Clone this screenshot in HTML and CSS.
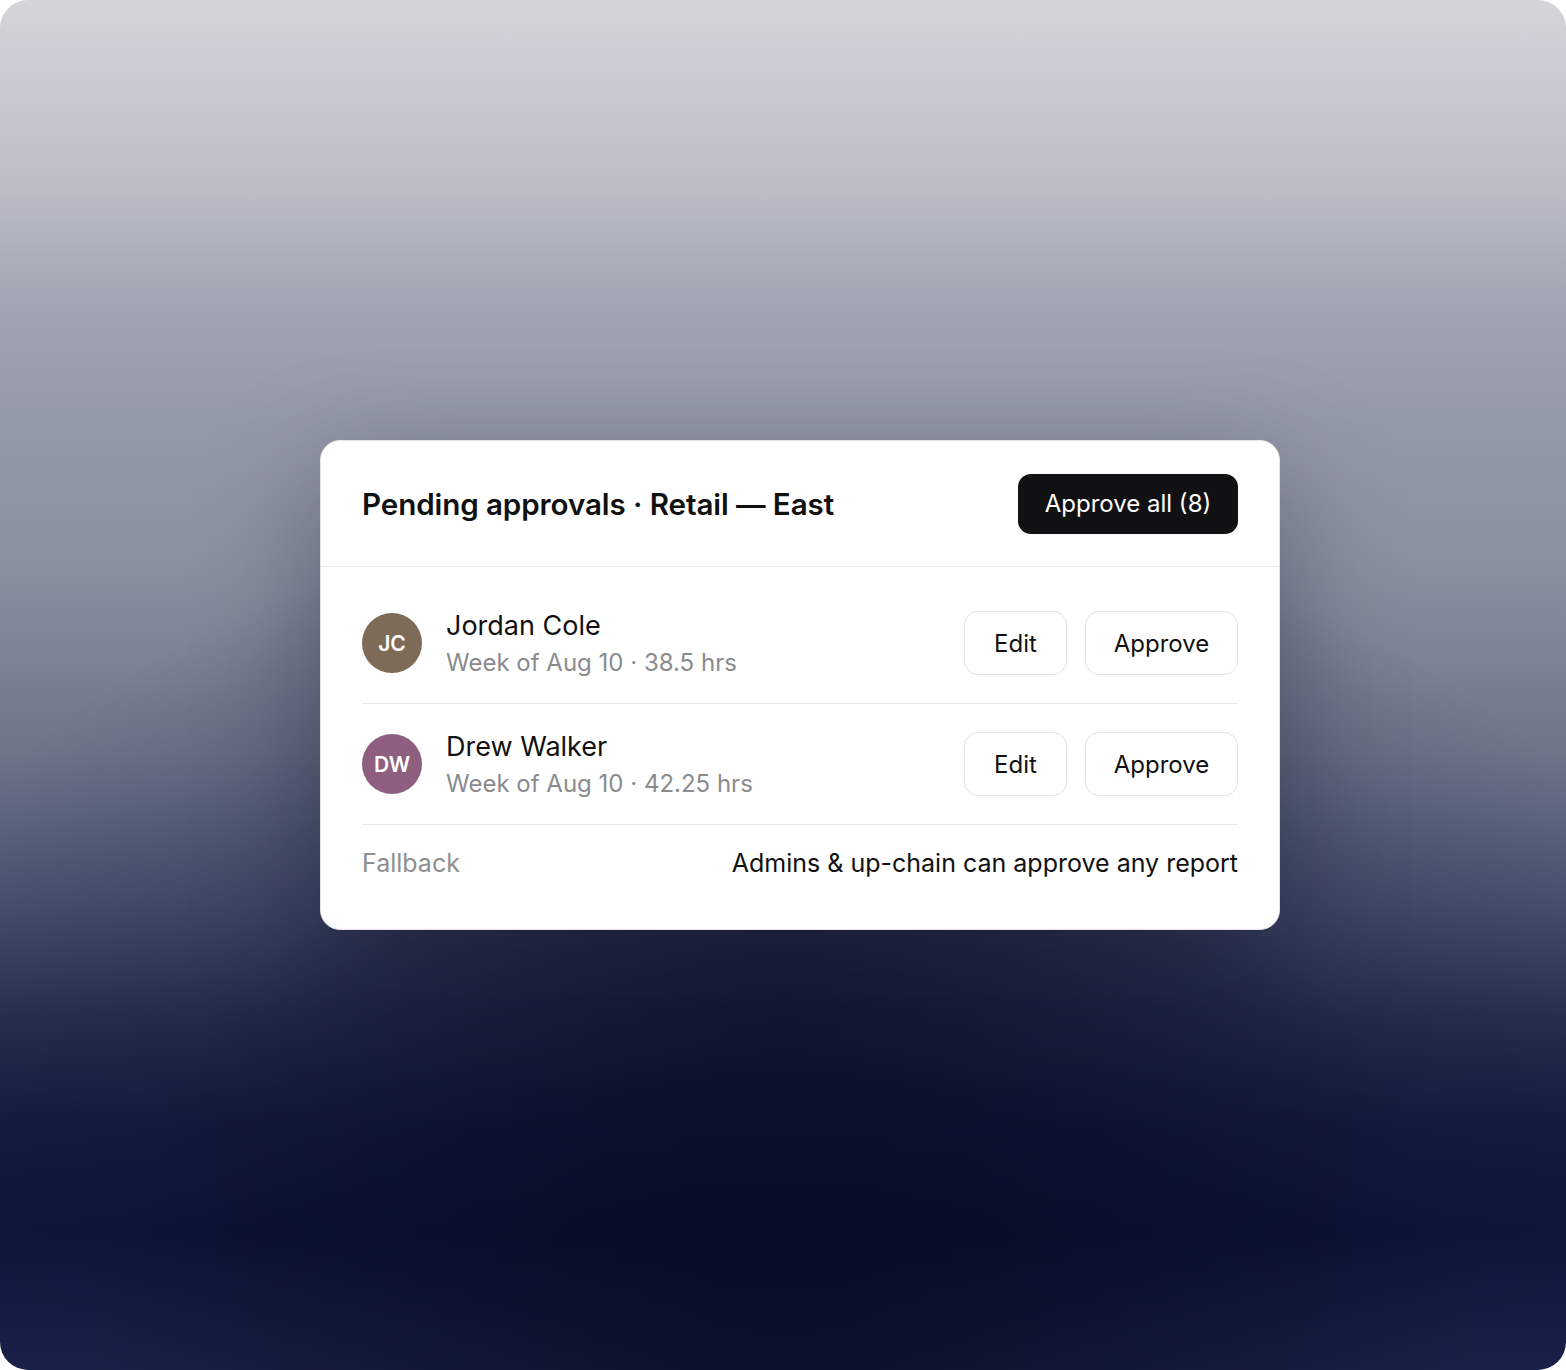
FILE: index.html
```html
<!DOCTYPE html>
<html lang="en">
<head>
<meta charset="utf-8">
<title>Pending approvals</title>
<link rel="stylesheet" href="styles.css">
</head>
<body>
<div class="stage">
  <div class="card">
    <div class="card-head">
      <h1 class="title">Pending approvals · Retail — East</h1>
      <button class="btn-primary">Approve all (8)</button>
    </div>
    <div class="card-body">
      <div class="row">
        <div class="avatar avatar-jc">JC</div>
        <div class="person">
          <div class="name">Jordan Cole</div>
          <div class="meta">Week of Aug 10 · 38.5 hrs</div>
        </div>
        <div class="actions">
          <button class="btn btn-edit">Edit</button>
          <button class="btn btn-approve">Approve</button>
        </div>
      </div>
      <div class="row">
        <div class="avatar avatar-dw">DW</div>
        <div class="person">
          <div class="name">Drew Walker</div>
          <div class="meta">Week of Aug 10 · 42.25 hrs</div>
        </div>
        <div class="actions">
          <button class="btn btn-edit">Edit</button>
          <button class="btn btn-approve">Approve</button>
        </div>
      </div>
      <div class="footer">
        <span class="footer-label">Fallback</span>
        <span class="footer-value">Admins &amp; up-chain can approve any report</span>
      </div>
    </div>
  </div>
</div>
</body>
</html>
```
FILE: styles.css
```css
html, body {
  margin: 0;
  padding: 0;
  background: #ffffff;
}
body {
  font-family: Inter, "Noto Sans", "Liberation Sans", sans-serif;
}
.stage {
  width: 1566px;
  height: 1370px;
  border-radius: 28px;
  overflow: hidden;
  box-sizing: border-box;
  display: flex;
  align-items: center;
  justify-content: center;
  padding-left: 34px;
  background:
    radial-gradient(ellipse 700px 620px at 50% 100%, rgba(3,5,20,0.55) 0%, rgba(3,5,20,0.25) 55%, rgba(3,5,20,0) 100%),
    radial-gradient(ellipse 900px 520px at 50% 75%, rgba(8,12,45,0.55) 0%, rgba(8,12,45,0.2) 60%, rgba(8,12,45,0) 100%),
    linear-gradient(180deg, #d3d5db 0%, #babdc6 14%, #a2a6b2 22%, #9499a6 31%, #8a90a0 41%, #6e7589 55%, #4a5170 66%, #2a3152 74%, #151b40 82%, #0e143a 90%, #1a2148 100%);
}
.card {
  width: 960px;
  height: 490px;
  box-sizing: border-box;
  background: #ffffff;
  border: 1.5px solid #e6e2df;
  border-radius: 20px;
  box-shadow: 0 40px 120px rgba(6, 9, 32, 0.35);
}
.card-head {
  height: 126px;
  box-sizing: border-box;
  padding: 0 41px;
  display: flex;
  align-items: center;
  justify-content: space-between;
  border-bottom: 1.5px solid #ebe7e4;
}
.title {
  margin: 0;
  font-size: 29.6px;
  font-weight: 600;
  color: #111111;
  letter-spacing: -0.1px;
}
.btn-primary {
  font-family: inherit;
  width: 220px;
  height: 60px;
  border: none;
  border-radius: 13px;
  background: #111012;
  color: #ffffff;
  font-size: 24px;
  font-weight: 400;
  cursor: pointer;
}
.card-body {
  padding: 16px 41px 0;
}
.row {
  display: flex;
  align-items: center;
  padding: 28px 0;
  border-bottom: 1px solid #ebe7e4;
}
.avatar {
  width: 60px;
  height: 60px;
  border-radius: 50%;
  display: flex;
  align-items: center;
  justify-content: center;
  color: #ffffff;
  font-size: 21px;
  font-weight: 600;
  flex-shrink: 0;
}
.avatar-jc { background: #7d6a57; }
.avatar-dw { background: #8e5f7e; }
.person {
  flex: 1;
  margin-left: 24px;
  display: flex;
  flex-direction: column;
}
.name {
  font-size: 27px;
  color: #111111;
  line-height: 28px;
  margin-top: 1px;
}
.meta {
  font-size: 24px;
  color: #8b8b8e;
  line-height: 28px;
  margin-top: 9px;
  margin-bottom: -2px;
}
.actions {
  display: flex;
  gap: 18px;
}
.btn {
  font-family: inherit;
  height: 64px;
  box-sizing: border-box;
  background: #ffffff;
  border: 1.5px solid #e8e1dd;
  border-radius: 14px;
  color: #111111;
  font-size: 24px;
  cursor: pointer;
}
.btn-edit { width: 103px; }
.btn-approve { width: 153px; }
.footer {
  display: flex;
  justify-content: space-between;
  align-items: center;
  padding: 22px 0 0;
  line-height: 32px;
  font-size: 25px;
}
.footer-label { color: #8e8e90; }
.footer-value { color: #111111; }
```
